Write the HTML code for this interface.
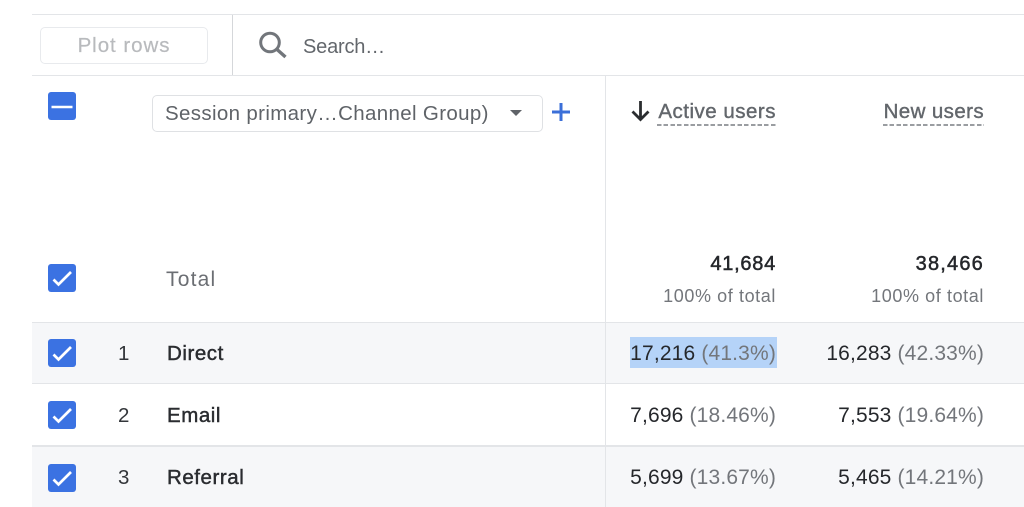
<!DOCTYPE html>
<html><head><meta charset="utf-8">
<style>
html,body{margin:0;padding:0;background:#fff;}
body{width:1024px;height:507px;overflow:hidden;position:relative;font-family:"Liberation Sans",sans-serif;}
.a{position:absolute;white-space:nowrap;line-height:24px;}
.l{position:absolute;background:#e3e5e8;}
.r{text-align:right;}
.cb{position:absolute;left:48px;width:28px;height:28px;background:#3b72e2;border-radius:3px;}
.cb svg{display:block;}
.v{font-size:21px;color:#25272b;letter-spacing:.16px;}
.v span{color:#73767b;}
.n{font-size:20.500px;color:#33363a;}
.d{font-size:20.500px;color:#2a2c30;letter-spacing:.55px;-webkit-text-stroke:.45px #2a2c30;}
.h{font-size:20.500px;color:#63676c;letter-spacing:.5px;-webkit-text-stroke:.4px #63676c;}
.t{font-size:20px;color:#25272b;letter-spacing:.75px;-webkit-text-stroke:.5px #25272b;}
.dash{position:absolute;height:2px;top:124px;background:repeating-linear-gradient(90deg,#9a9da1 0,#9a9da1 4.500px,transparent 4.500px,transparent 6.700px);}
</style></head><body>
<div class="l" style="left:32px;top:14px;width:992px;height:1px;"></div>
<div class="l" style="left:32px;top:75px;width:992px;height:1px;"></div>
<div class="l" style="left:232px;top:15px;width:1px;height:60px;background:#d5d7da;"></div>
<div style="position:absolute;left:40px;top:27px;width:166px;height:35px;border:1px solid #e8eaed;border-radius:5px;"></div>
<div class="a" style="left:40px;top:34px;width:168px;text-align:center;font-size:20.500px;color:#b8babd;letter-spacing:.95px;-webkit-text-stroke:.2px #b8babd;">Plot rows</div>
<svg style="position:absolute;left:256px;top:30px;" width="32" height="30" viewBox="0 0 32 30"><circle cx="14" cy="12.500" r="9.300" fill="none" stroke="#72767b" stroke-width="3"/><path d="M20.500 19L29.500 27" stroke="#72767b" stroke-width="3.400" fill="none"/></svg>
<div class="a" style="left:303px;top:35px;font-size:20px;color:#63676c;letter-spacing:-.2px;">Search…</div>

<div class="cb" style="top:92px;"><svg width="28" height="28"><path d="M3.500 15H24.500" stroke="#fff" stroke-width="2.500"/></svg></div>
<div style="position:absolute;left:152px;top:95px;width:389px;height:35px;border:1px solid #dfe1e4;border-radius:5px;"></div>
<div class="a" style="left:165px;top:102px;font-size:20.500px;color:#5f6368;letter-spacing:.35px;">Session primary…Channel Group)</div>
<svg style="position:absolute;left:508px;top:108px;" width="16" height="10"><path d="M2 2H14L8 8Z" fill="#5f6368"/></svg>
<svg style="position:absolute;left:550px;top:101px;" width="22" height="22"><path d="M11 2V20M2 11H20" stroke="#3b6fd8" stroke-width="3"/></svg>

<svg style="position:absolute;left:629px;top:99px;" width="24" height="24"><path d="M11.500 2V20M3.500 12.500L11.500 20.500L19.500 12.500" fill="none" stroke="#2b2d30" stroke-width="2.800"/></svg>
<div class="a r h" style="right:248px;top:100px;">Active users</div>
<div class="dash" style="left:657px;width:119px;"></div>
<div class="a r h" style="right:40px;top:100px;letter-spacing:.4px;">New users</div>
<div class="dash" style="left:883px;width:101px;"></div>

<div class="cb" style="top:264px;"><svg width="28" height="28"><path d="M5.500 15.500L10.500 20.500L23 8" fill="none" stroke="#fff" stroke-width="2.700"/></svg></div>
<div class="a" style="left:166px;top:268px;font-size:21px;color:#6b6e73;letter-spacing:1.2px;">Total</div>
<div class="a r t" style="right:248px;top:252px;">41,684</div>
<div class="a r t" style="right:40px;top:252px;letter-spacing:1.2px;">38,466</div>
<div class="a r" style="right:248px;top:284px;font-size:18px;color:#73767b;letter-spacing:.6px;">100% of total</div>
<div class="a r" style="right:40px;top:284px;font-size:18px;color:#73767b;letter-spacing:.6px;">100% of total</div>

<div style="position:absolute;left:32px;top:322px;width:992px;height:61px;background:#f6f7f9;"></div>
<div style="position:absolute;left:32px;top:446px;width:992px;height:61px;background:#f6f7f9;"></div>
<div class="l" style="left:32px;top:322px;width:992px;height:1px;"></div>
<div class="l" style="left:32px;top:383px;width:992px;height:1px;"></div>
<div class="l" style="left:32px;top:445px;width:992px;height:2px;"></div>
<div class="l" style="left:605px;top:76px;width:1px;height:431px;"></div>
<div style="position:absolute;left:630px;top:337px;width:147px;height:31px;background:#b5d3f8;"></div>

<div class="cb" style="top:339px;"><svg width="28" height="28"><path d="M5.500 15.500L10.500 20.500L23 8" fill="none" stroke="#fff" stroke-width="2.700"/></svg></div>
<div class="cb" style="top:401px;"><svg width="28" height="28"><path d="M5.500 15.500L10.500 20.500L23 8" fill="none" stroke="#fff" stroke-width="2.700"/></svg></div>
<div class="cb" style="top:464px;"><svg width="28" height="28"><path d="M5.500 15.500L10.500 20.500L23 8" fill="none" stroke="#fff" stroke-width="2.700"/></svg></div>

<div class="a n" style="left:118px;top:342px;">1</div>
<div class="a n" style="left:118px;top:404px;">2</div>
<div class="a n" style="left:118px;top:466px;">3</div>
<div class="a d" style="left:167px;top:342px;">Direct</div>
<div class="a d" style="left:167px;top:404px;">Email</div>
<div class="a d" style="left:167px;top:466px;">Referral</div>

<div class="a r v" style="right:248px;top:342px;">17,216 <span>(41.3%)</span></div>
<div class="a r v" style="right:40px;top:342px;">16,283 <span>(42.33%)</span></div>
<div class="a r v" style="right:248px;top:404px;">7,696 <span>(18.46%)</span></div>
<div class="a r v" style="right:40px;top:404px;">7,553 <span>(19.64%)</span></div>
<div class="a r v" style="right:248px;top:466px;">5,699 <span>(13.67%)</span></div>
<div class="a r v" style="right:40px;top:466px;">5,465 <span>(14.21%)</span></div>
</body></html>
